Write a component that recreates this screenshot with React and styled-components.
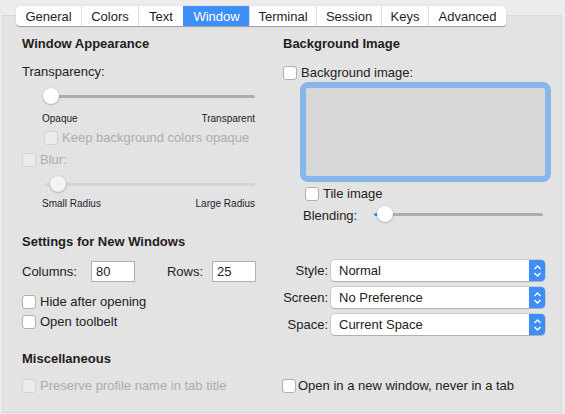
import styled, { createGlobalStyle } from 'styled-components';

const GlobalStyle = createGlobalStyle`
  html, body {
    margin: 0;
    padding: 0;
    background: #ececec;
    font-family: "Liberation Sans", Arial, sans-serif;
    color: #222;
  }
`;

const tabs = ['General', 'Colors', 'Text', 'Window', 'Terminal', 'Session', 'Keys', 'Advanced'];
const tabWidths = [65, 57, 45, 66, 67, 65, 47, 78];

export default function App() {
  return (
    <Page>
      <GlobalStyle />
      <TabBar>
        {tabs.map((t, i) => (
          <Tab key={t} $active={t === 'Window'} style={{ width: tabWidths[i] }}>
            {t}
          </Tab>
        ))}
      </TabBar>
      <Panel>
        <TopGrid>
          <Column>
            <Heading>Window Appearance</Heading>
            <Label $top={12}>Transparency:</Label>
            <Slider $left={23} $width={210} $top={8} $thumb={-2} />
            <Captions $left={20} $width={213} $top={7}>
              <span>Opaque</span>
              <span>Transparent</span>
            </Captions>
            <CheckRow $indent={22} $top={4} $disabled>
              <Box $disabled />
              Keep background colors opaque
            </CheckRow>
            <CheckRow $top={5} $disabled>
              <Box $disabled />
              Blur:
            </CheckRow>
            <Slider $left={23} $width={210} $top={8} $thumb={5} $disabled />
            <Captions $left={20} $width={213} $top={4}>
              <span>Small Radius</span>
              <span>Large Radius</span>
            </Captions>
          </Column>
          <Column>
            <Heading>Background Image</Heading>
            <CheckRow $top={12}>
              <Box />
              Background image:
            </CheckRow>
            <ImageWell />
            <CheckRow $indent={22} $top={3}>
              <Box />
              Tile image
            </CheckRow>
            <BlendRow>
              <span>Blending:</span>
              <Slider $left={0} $width={169} $top={0} $thumb={3} $blue />
            </BlendRow>
          </Column>
        </TopGrid>

        <MidGrid>
          <Column>
            <Heading>Settings for New Windows</Heading>
            <FieldRow>
              <FieldLabel $gap={14}>Columns:</FieldLabel>
              <TextField>80</TextField>
              <FieldLabel $gap={9} style={{ marginLeft: 32 }}>Rows:</FieldLabel>
              <TextField>25</TextField>
            </FieldRow>
            <CheckRow $top={11}>
              <Box />
              Hide after opening
            </CheckRow>
            <CheckRow $top={3}>
              <Box />
              Open toolbelt
            </CheckRow>
          </Column>
          <PopupColumn>
            {[
              ['Style:', 'Normal'],
              ['Screen:', 'No Preference'],
              ['Space:', 'Current Space'],
            ].map(([l, v]) => (
              <PopupRow key={l}>
                <PopupLabel>{l}</PopupLabel>
                <Popup>
                  <span>{v}</span>
                  <Arrows>
                    <svg width="9" height="14" viewBox="0 0 9 14">
                      <path d="M1.5 5 L4.5 2 L7.5 5 M1.5 9 L4.5 12 L7.5 9" fill="none" stroke="#fff" strokeWidth="1.4" />
                    </svg>
                  </Arrows>
                </Popup>
              </PopupRow>
            ))}
          </PopupColumn>
        </MidGrid>

        <Heading style={{ marginTop: 16 }}>Miscellaneous</Heading>
        <MiscGrid>
          <CheckRow $disabled>
            <Box $disabled />
            Preserve profile name in tab title
          </CheckRow>
          <CheckRow $gap={2}>
            <Box />
            Open in a new window, never in a tab
          </CheckRow>
        </MiscGrid>
      </Panel>
    </Page>
  );
}

const Page = styled.div`
  width: 565px;
  height: 414px;
  padding-top: 6px;
  box-sizing: border-box;
  display: flex;
  flex-direction: column;
  overflow: hidden;
`;

const TabBar = styled.div`
  display: flex;
  align-self: flex-start;
  margin-left: 16px;
  height: 20px;
  background: #fff;
  border-radius: 4px;
  box-shadow: 0 0.5px 1px rgba(0, 0, 0, 0.3);
  position: relative;
  z-index: 1;
  overflow: hidden;
`;

const Tab = styled.div`
  display: flex;
  align-items: center;
  justify-content: center;
  box-sizing: border-box;
  font-size: 13px;
  color: ${p => (p.$active ? '#fff' : '#1d1d1d')};
  background: ${p => (p.$active ? '#3d8ef7' : 'transparent')};
  border-left: 1px solid ${p => (p.$active ? '#3d8ef7' : '#e0e0e0')};
  &:first-child {
    border-left: none;
  }
`;

const Panel = styled.div`
  margin: -11px 3px 0 2px;
  height: 398px;
  background: #e3e3e3;
  border: 1px solid #d9d9d9;
  box-sizing: border-box;
  padding: 20px 0 0 19px;
`;

const TopGrid = styled.div`
  display: grid;
  grid-template-columns: 261px 270px;
`;

const MidGrid = styled.div`
  display: grid;
  grid-template-columns: 250px 275px;
  margin-top: 10px;
`;

const MiscGrid = styled.div`
  display: grid;
  grid-template-columns: 260px 280px;
  margin-top: 10px;
`;

const Column = styled.div`
  display: flex;
  flex-direction: column;
  align-items: flex-start;
`;

const Heading = styled.div`
  font-size: 13px;
  font-weight: bold;
  color: #241c1c;
  line-height: 16px;
`;

const Label = styled.div`
  font-size: 13px;
  line-height: 16px;
  margin-top: ${p => p.$top || 0}px;
`;

const Slider = styled.div`
  position: relative;
  margin-top: ${p => p.$top}px;
  margin-left: ${p => p.$left}px;
  width: ${p => p.$width}px;
  height: 18px;
  &::before {
    content: '';
    position: absolute;
    left: 0;
    right: 0;
    top: 7px;
    height: 3px;
    border-radius: 2px;
    background: ${p => (p.$disabled ? '#d6d3d0' : '#b3aca6')};
    ${p => (p.$blue ? 'background: linear-gradient(to right, #3d8ef7 0 6px, #b3aca6 6px);' : '')}
  }
  &::after {
    content: '';
    position: absolute;
    top: 0;
    left: ${p => p.$thumb}px;
    width: 16px;
    height: 16px;
    border-radius: 50%;
    background: ${p => (p.$disabled ? '#f4f4f4' : '#fff')};
    box-shadow: 0 0.5px 2px rgba(0, 0, 0, 0.35);
  }
`;

const Captions = styled.div`
  display: flex;
  justify-content: space-between;
  margin-left: ${p => p.$left}px;
  width: ${p => p.$width}px;
  margin-top: ${p => p.$top}px;
  font-size: 10px;
  line-height: 12px;
  color: #1d1d2d;
`;

const CheckRow = styled.label`
  display: flex;
  align-items: center;
  gap: ${p => (p.$gap ?? 4)}px;
  margin-top: ${p => p.$top || 0}px;
  margin-left: ${p => p.$indent || 0}px;
  font-size: 13px;
  line-height: 17px;
  color: ${p => (p.$disabled ? '#b2aba5' : '#222')};
`;

const Box = styled.span`
  width: 12px;
  height: 12px;
  border-radius: 3px;
  background: ${p => (p.$disabled ? '#ececec' : '#fff')};
  border: 1px solid ${p => (p.$disabled ? '#d2d2d2' : '#b8aea4')};
  flex-shrink: 0;
`;

const ImageWell = styled.div`
  margin: 1px 0 0 17px;
  width: 239px;
  height: 88px;
  border: 6px solid #86b6ea;
  border-radius: 8px;
  background: #d7d7d7;
`;

const BlendRow = styled.div`
  display: flex;
  align-items: center;
  gap: 17px;
  margin: 4px 0 0 20px;
  font-size: 13px;
`;

const FieldRow = styled.div`
  display: flex;
  align-items: center;
  margin-top: 11px;
  font-size: 13px;
`;

const FieldLabel = styled.span`
  margin-right: ${p => p.$gap}px;
`;

const TextField = styled.div`
  width: 44px;
  height: 21px;
  box-sizing: border-box;
  background: #fff;
  border: 1px solid #b8aea4;
  padding: 2px 0 0 4px;
  font-size: 13px;
`;

const PopupColumn = styled.div`
  display: flex;
  flex-direction: column;
  gap: 6px;
  padding-top: 26px;
`;

const PopupRow = styled.div`
  display: flex;
  align-items: center;
  justify-content: flex-end;
  gap: 3px;
  width: 273px;
`;

const PopupLabel = styled.span`
  font-size: 13px;
`;

const Popup = styled.div`
  display: flex;
  width: 214px;
  height: 21px;
  box-sizing: border-box;
  background: #fff;
  border-radius: 4px;
  box-shadow: 0 0 0 0.5px rgba(0, 0, 0, 0.2), 0 1px 1px rgba(0, 0, 0, 0.15);
  overflow: hidden;
  font-size: 13px;
  align-items: center;
  span {
    flex: 1;
    padding-left: 8px;
  }
`;

const Arrows = styled.div`
  width: 16px;
  height: 100%;
  background: #3d8ef7;
  display: flex;
  align-items: center;
  justify-content: center;
`;
